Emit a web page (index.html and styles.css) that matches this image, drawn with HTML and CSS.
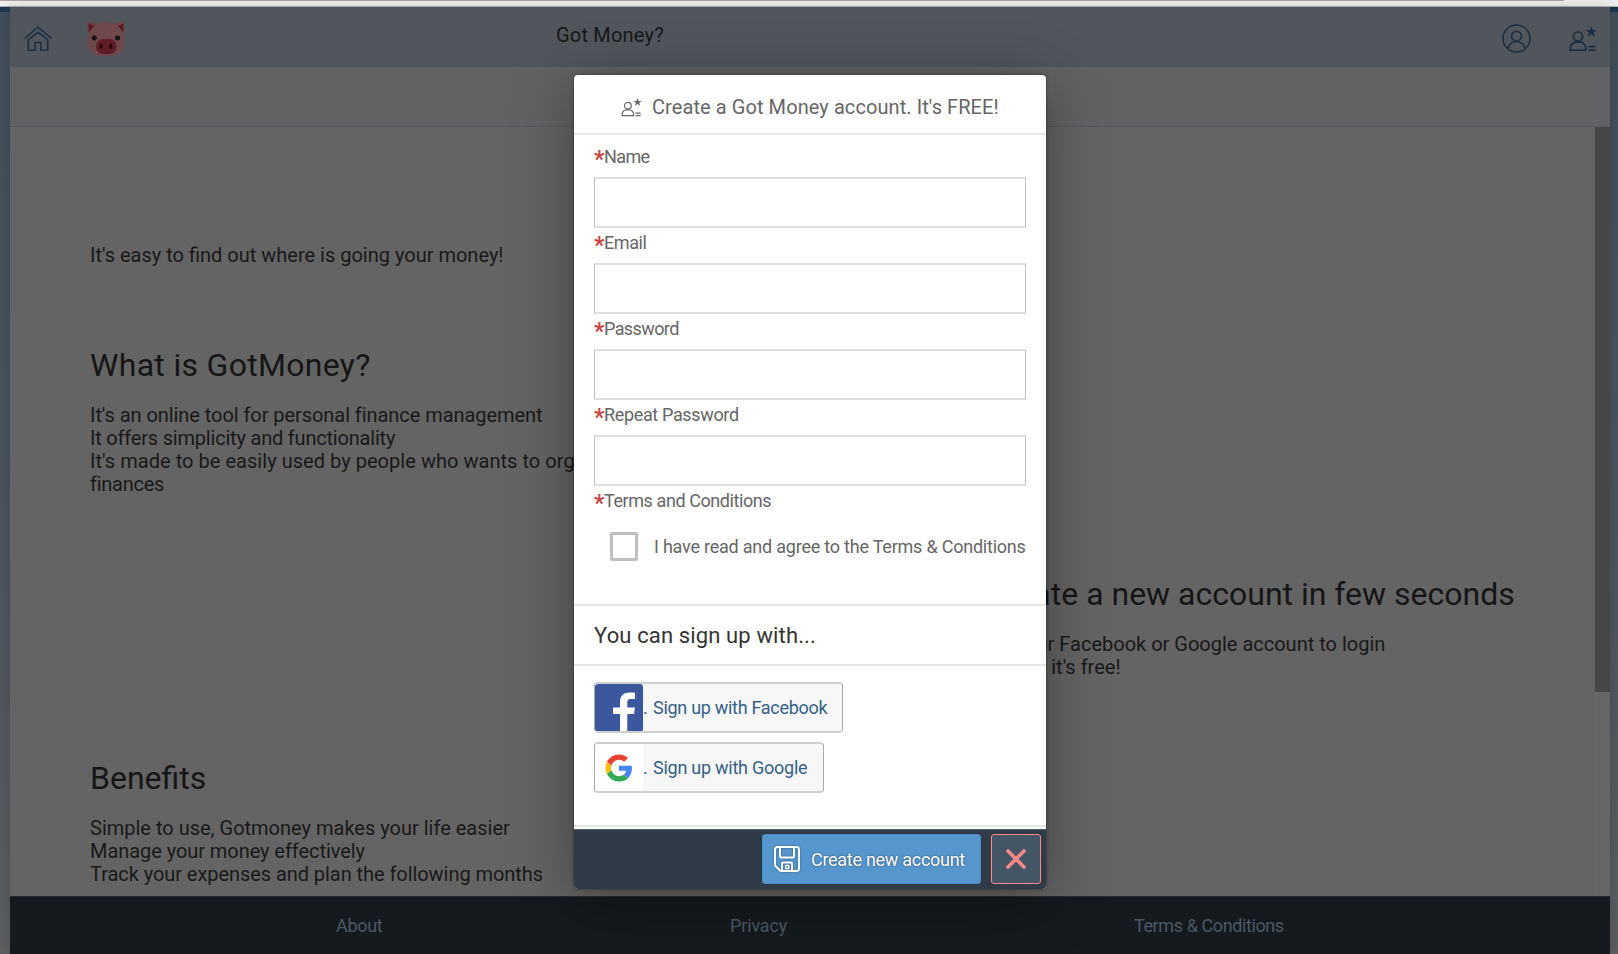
FILE: index.html
```html
<!DOCTYPE html>
<html lang="en">
<head>
<meta charset="utf-8">
<title>Got Money?</title>
<link rel="stylesheet" href="styles.css">
</head>
<body>
<svg class="defs" aria-hidden="true">
  <symbol id="user-star" viewBox="0 0 28 26">
    <circle cx="9" cy="10.6" r="4.6" fill="none" stroke="currentColor" stroke-width="1.700"/>
    <path d="M1.200 24.200V22q.4-4.500 5.300-5.900h5q5 1.400 5.300 5.900v2.200z" fill="none" stroke="currentColor" stroke-width="1.700"/>
    <path d="M22.300 0l1.400 4.100h4.300l-3.500 2.500 1.400 4.100-3.600-2.500-3.600 2.500 1.400-4.100-3.500-2.500h4.300z" fill="currentColor"/>
    <path d="M19.500 20.700h7M19.500 24.200h7" stroke="currentColor" stroke-width="1.800"/>
  </symbol>
</svg>
<div class="browser-edge"><div class="browser-line"></div></div>
<div class="backdrop">
  <div class="shell">
    <header class="bar">
      <svg class="home" viewBox="0 0 28 26" fill="none" stroke="currentColor" stroke-width="1.600"><path d="M.5 12.500L14 1.200l13.500 11.300"/><path d="M4.300 13.600L14 6.300l9.700 7.300v10.600h-6.900v-7.700h-5.600v7.700H4.300z"/></svg>
      <svg class="pig" viewBox="0 0 38 36">
        <path d="M.5 2q0-2 2-1.500l8 2.500-8 10q-3-4-2-11zM37.500 2q0-2-2-1.500l-8 2.500 8 10q3-4 2-11z" fill="#6f4346"/>
        <path d="M1.500 2.500l6 2.500-5 7q-1.500-5-1-9.500zM36.500 2.500l-6 2.500 5 7q1.500-5 1-9.500z" fill="#5e1c26"/>
        <path d="M19 1C11 1 4 6 1.500 14 0 19-.5 27 3 30.500 7 34.500 13 35 19 35s12-.5 16-4.500c3.500-3.500 3-11.500 1.500-16.500C34 6 27 1 19 1z" fill="#6f484b"/>
        <rect x="9" y="18" width="20.500" height="15" rx="7" fill="#5e1c26"/>
        <circle cx="7.300" cy="17" r="2.500" fill="#151314"/><circle cx="30.500" cy="17" r="2.500" fill="#151314"/>
        <ellipse cx="14.200" cy="25" rx="1.700" ry="2.800" fill="#260c0b"/><ellipse cx="23.800" cy="25" rx="1.700" ry="2.800" fill="#260c0b"/>
      </svg>
      <span class="brand">Got Money?</span>
      <svg class="account" viewBox="0 0 29 29" fill="none" stroke="currentColor" stroke-width="1.600"><circle cx="14.500" cy="14.500" r="13.500"/><circle cx="14.500" cy="12.200" r="5"/><path d="M6 25q1-7 8.500-7.500Q22 18 23 25"/></svg>
      <svg class="register"><use href="#user-star"/></svg>
    </header>
    <div class="subbar"></div>
    <div class="body">
      <main class="content">
        <section class="left">
          <p class="lead">It's easy to find out where is going your money!</p>
          <h2 class="h-what">What is GotMoney?</h2>
          <p class="l1">It's an online tool for personal finance management</p>
          <p class="l2">It offers simplicity and functionality</p>
          <p class="l3">It's made to be easily used by people who wants to organize their</p>
          <p class="l4">finances</p>
          <h2 class="h-benefits">Benefits</h2>
          <p class="b1">Simple to use, Gotmoney makes your life easier</p>
          <p class="b2">Manage your money effectively</p>
          <p class="b3">Track your expenses and plan the following months</p>
        </section>
        <section class="right">
          <h2 class="h-create">Create a new account in few seconds</h2>
          <p class="r1">Use your Facebook or Google account to login</p>
          <p class="r2">Signup it's free!</p>
        </section>
      </main>
      <div class="track"><div class="thumb"></div></div>
    </div>
    <footer class="links"><a class="about">About</a><a class="privacy">Privacy</a><a class="terms">Terms &amp; Conditions</a></footer>
  </div>
</div>

<div class="dialog" role="dialog">
  <div class="dialog-head"><svg class="title-icon"><use href="#user-star"/></svg><h1 class="title">Create a Got Money account. It's FREE!</h1></div>
  <form class="form">
    <label><b>*</b><span class="f1">Name</span></label><input type="text">
    <label><b>*</b><span class="f2">Email</span></label><input type="text">
    <label><b>*</b><span class="f3">Password</span></label><input type="password">
    <label><b>*</b><span class="f4">Repeat Password</span></label><input type="password">
    <label><b>*</b><span class="f5">Terms and Conditions</span></label>
    <div class="agree"><span class="box"></span><span class="agree-text">I have read and agree to the Terms &amp; Conditions</span></div>
  </form>
  <h2 class="signup"><span>You can sign up with...</span></h2>
  <div class="social">
    <div class="btn fb">
      <svg viewBox="0 0 48 48"><rect width="48" height="48" rx="3" fill="#3b579d"/><path d="M25 48V30h-7v-6.500h7V18c0-6.500 4-9.500 9.500-9.500 2.600 0 4.500.2 5.500.3v6.100h-4c-3 0-3.700 1.600-3.700 3.800v4.800H40L39 30h-6.700v18z" fill="#fff"/></svg>
      <span class="dot">.</span><span class="fb-text">Sign up with Facebook</span>
    </div>
    <div class="btn google">
      <svg viewBox="0 0 48 48"><rect width="48" height="48" fill="#fff"/><g transform="translate(10.500 10.500) scale(.5625)"><path fill="#EA4335" d="M24 9.500c3.540 0 6.710 1.220 9.210 3.600l6.850-6.850C35.900 2.380 30.470 0 24 0 14.620 0 6.510 5.380 2.560 13.220l7.980 6.190C12.430 13.720 17.740 9.500 24 9.500z"/><path fill="#4285F4" d="M46.980 24.550c0-1.570-.15-3.090-.38-4.550H24v9.020h12.940c-.58 2.960-2.260 5.480-4.780 7.180l7.730 6c4.510-4.180 7.090-10.360 7.090-17.650z"/><path fill="#FBBC05" d="M10.530 28.590c-.48-1.450-.76-2.990-.76-4.590s.27-3.140.76-4.590l-7.980-6.190C.92 16.460 0 20.120 0 24s.92 7.540 2.560 10.780l7.970-6.190z"/><path fill="#34A853" d="M24 48c6.480 0 11.930-2.130 15.890-5.810l-7.730-6c-2.150 1.450-4.920 2.300-8.160 2.300-6.260 0-11.570-4.220-13.470-9.910l-7.980 6.190C6.510 42.620 14.620 48 24 48z"/></g></svg>
      <span class="dot">.</span><span class="google-text">Sign up with Google</span>
    </div>
  </div>
  <div class="dialog-foot">
    <div class="create"><svg viewBox="0 0 26 26" fill="none" stroke="currentColor" stroke-width="1.900"><path d="M3.500 1h19q2.500 0 2.500 2.500v19q0 2.500-2.500 2.500H6.500L1 19.500v-16Q1 1 3.500 1z"/><path d="M6 1v9.500q0 1 1 1h12q1 0 1-1V1M8 25v-7.500q0-1 1-1h8q1 0 1 1V25"/><path d="M11.800 19.500h3v3h-3z" stroke-width="1.300"/></svg><span>Create new account</span></div>
    <div class="close"><svg viewBox="0 0 20 20"><path d="M2 2l16 16M18 2L2 18" stroke="currentColor" stroke-width="3.600" stroke-linecap="round"/></svg></div>
  </div>
</div>
</body>
</html>
```
FILE: styles.css
```css
* { box-sizing: border-box; }
body { margin: 0; width: 1618px; height: 954px; overflow: hidden; position: relative; display: flex; flex-direction: column; font-family: Roboto, "Liberation Sans", sans-serif; }
h1, h2, p { margin: 0; font-weight: 400; white-space: nowrap; }
.defs { position: absolute; width: 0; height: 0; }
.browser-edge { height: 7px; background: #f1f0f1; border-bottom: 1px solid #adafb0; }
.browser-line { width: 1564px; height: 1px; background: #aaa6a9; }
.backdrop { height: 947px; padding: 0 8px 0 10px; background: linear-gradient(#1c3850 5px, transparent 5px), linear-gradient(#414f5a, #4d555f 60%, #5c5e60); }
.shell { display: flex; flex-direction: column; height: 100%; box-shadow: 0 0 12px rgba(0,0,0,.18); }
.bar { height: 60px; background: #51565c; display: flex; align-items: flex-start; color: #1b2f40; }
.home { width: 28px; height: 26px; margin: 19px 0 0 14px; }
.pig { width: 38px; height: 36px; margin: 14px 0 0 35px; }
.brand { flex: 1; margin-left: 431px; color: #171819; font-size: 20px; line-height: 56px; letter-spacing: .2px; }
.account { width: 29px; height: 29px; margin-top: 17px; }
.register { width: 28px; height: 26px; margin: 19px 13px 0 38px; }
.subbar { height: 60px; background: #616263; border-bottom: 1px solid #545861; }
.body { flex: 1; display: flex; background: #646464; min-height: 0; }
.content { flex: 1; display: flex; color: #191919; font-size: 20px; line-height: 23px; }
.left { width: 975px; padding: 117px 0 0 80px; }
.lead { margin-bottom: 78px; }
.content h2 { font-size: 32px; line-height: 40px; margin-bottom: 19px; color: #161616; }
.content .h-benefits { margin-top: 262px; }
.h-what { letter-spacing: .31px; }
.l1, .b2, .b3 { letter-spacing: -.06px; }
.l2 { letter-spacing: -.2px; }
.l3 { letter-spacing: .04px; }
.l4 { letter-spacing: -.25px; }
.right { flex: 1; padding-top: 447px; }
.r1 { margin-left: -8px; }
.r2 { width: 134px; text-align: right; }
.track { width: 15px; background: #676667; }
.thumb { height: 565px; background: #474747; }
.links { height: 58px; background: #151a1e; border-top: 1px solid #232b32; display: flex; align-items: center; color: #4b5865; font-size: 18px; letter-spacing: -.3px; }
.about { width: 394px; margin-left: 326px; }
.privacy { width: 404px; letter-spacing: -.15px; }
.terms { letter-spacing: -.4px; }
.dialog { position: absolute; left: 574px; top: 75px; width: 472px; height: 814px; background: #fff; border-radius: 4px; overflow: hidden; box-shadow: 0 0 3px rgba(0,0,0,.5), 0 10px 60px rgba(0,0,0,.35); display: flex; flex-direction: column; }
.dialog-head { height: 60px; border-bottom: 2px solid #e8e8e8; padding: 6px 0 0 47px; display: flex; align-items: center; color: #666; }
.title-icon { width: 21px; height: 19px; margin-right: 10px; }
.title { font-size: 20px; letter-spacing: .08px; }
.form { height: 469px; padding: 7px 20px 0; color: #666; font-size: 18px; }
.form label { display: flex; height: 30px; line-height: 30px; margin-bottom: 5px; }
.f1, .f3 { letter-spacing: -.6px; }
.f2, .f5 { letter-spacing: -.42px; }
.f4 { letter-spacing: -.35px; }
.form b { width: 10px; color: #c94545; font-size: 23px; line-height: 35px; }
.form input { display: block; width: 432px; height: 51px; margin: 0; padding: 0 10px; border: solid #bfbfbf; border-width: 2px 1px; border-top-color: #dfdfdf; border-bottom-color: #dfdfdf; border-radius: 0; background: #fff; outline: 0; }
.agree { display: flex; align-items: center; padding: 11px 0 0 16px; }
.box { flex: none; width: 28px; height: 29px; border: 3px solid #bfbfbf; border-radius: 2px; }
.agree-text { margin-left: 16px; white-space: nowrap; letter-spacing: -.22px; }
.signup { height: 62px; border: solid #e5e5e5; border-width: 2px 0; padding-left: 20px; font-size: 22px; line-height: 59px; letter-spacing: .13px; color: #333; }
.social { height: 161px; padding: 16px 20px 0; border-bottom: 2px solid #e5e5e5; display: flex; flex-direction: column; align-items: flex-start; gap: 9px; }
.btn { height: 51px; display: flex; align-items: center; border: solid #ababab; border-width: 2px 1px; border-top-color: #cfcfcf; border-bottom-color: #cfcfcf; border-radius: 4px; background: #f7f7f7; color: #346187; font-size: 18px; overflow: hidden; white-space: nowrap; }
.btn svg { width: 48px; height: 48px; flex: none; }
.fb { width: 249px; }
.google { width: 230px; }
.dot { width: 10px; }
.fb-text { letter-spacing: -.29px; }
.google-text { letter-spacing: -.25px; }
.dialog-foot { height: 60px; margin-top: auto; background: #2f3c48; border-top: 1px solid #4b6073; display: flex; justify-content: flex-end; padding: 4px 5px 0; gap: 10px; }
.create { width: 219px; height: 50px; background: #5496cd; border: 1px solid #4a8cc8; border-radius: 3px; color: #fff; display: flex; align-items: center; padding-left: 11px; font-size: 18px; letter-spacing: -.28px; white-space: nowrap; text-shadow: 0 0 2px rgba(0,0,0,.6); }
.create svg { width: 26px; height: 26px; margin-right: 11px; filter: drop-shadow(0 0 1px rgba(0,0,0,.35)); }
.close { width: 50px; height: 50px; border: 1px solid #ff8888; border-radius: 3px; background: #445566; color: #ff8888; display: flex; align-items: center; justify-content: center; }
.close svg { width: 20px; height: 20px; }
```
